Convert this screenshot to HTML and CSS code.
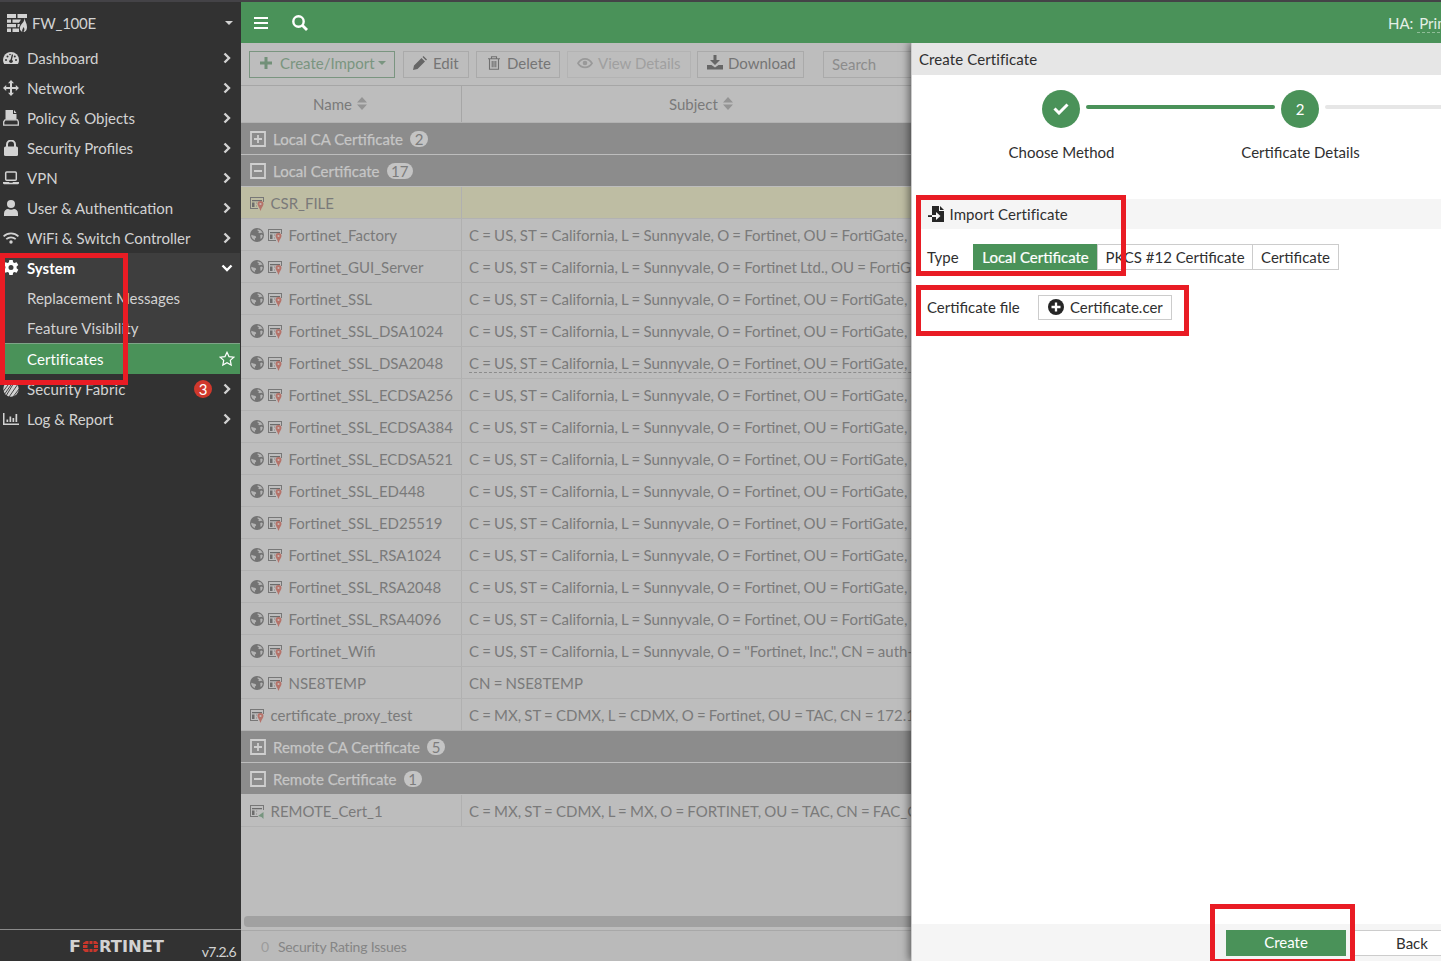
FILE: index.html
```html
<!DOCTYPE html>
<html lang="en">
<head>
<meta charset="utf-8">
<title>FW_100E - Certificates</title>
<link rel="stylesheet" href="styles.css">
</head>
<body>
<svg class="defs" aria-hidden="true">
  <symbol id="chev" viewBox="0 0 8 12"><path d="M1.5 1.5 6 6 1.5 10.5" fill="none" stroke="currentColor" stroke-width="2.4"/></symbol>
  <symbol id="globe" viewBox="0 0 14 14"><circle cx="7" cy="7" r="7" fill="#737373"/><path d="M7.6 1.2 11 2.4 12.8 5.2 11.2 4.8 9.6 5.2 8.2 4.4 9 3.2 7.6 2.8zM1.3 6.8 3.4 7.6 5.6 8 6.2 9.4 5 10.6 4.8 12.2 2.6 10.8 1.3 8.6zM10.2 7 11.6 6.6 12.8 7.6 11.8 10.2 10.4 10.8 10.4 8.8z" fill="#b4b4b4"/></symbol>
  <symbol id="cert" viewBox="0 0 14 14"><path d="M0 .5h14M.5 0v12M0 11.5h8M13.500 0v5" fill="none" stroke="#777" stroke-width="1"/><path d="M2 3h10v1.200H2zM2 5.500h2.500V10H2z" fill="#6c6c6c"/><path d="M6 6h1.200M6 9h1" stroke="#888" fill="none"/></symbol>
  <symbol id="local" viewBox="0 0 14 14"><use href="#cert" width="14" height="14"/><path d="M10.500 4a3 3 0 0 1 3 3c0 1.700-1.800 3.200-3 7-1.200-3.800-3-5.300-3-7a3 3 0 0 1 3-3z" fill="#b5736a"/><circle cx="10.500" cy="7" r="1.100" fill="#c8b8b5"/></symbol>
  <symbol id="remote" viewBox="0 0 14 14"><use href="#cert" width="14" height="14"/><path d="M7 9 14 5v9H9z" fill="#bdbdbd"/><path d="m8 11 5.500-4v7l-2-2z" fill="#77957f"/></symbol>
  <symbol id="plusbox" viewBox="0 0 16 16"><path d="M1 1h14v14H1zM4 8h8M8 4v8" fill="none" stroke="#cfcfcf" stroke-width="1.800"/></symbol>
  <symbol id="minusbox" viewBox="0 0 16 16"><path d="M1 1h14v14H1zM4 8h8" fill="none" stroke="#cfcfcf" stroke-width="1.800"/></symbol>
  <symbol id="sort" viewBox="0 0 10 13"><path d="M5 0l5 5.500H0zM0 7.500h10L5 13z" fill="#949494"/></symbol>
</svg>

<div class="app">
  <nav class="sidebar">
    <div class="host">
      <svg class="fw" viewBox="0 0 20 18"><path d="M0 0h9v4H0zM10.500 0H20v4h-9.500zM0 5.500h4v3.300H0zM5.500 5.500H14l-2 3.300H5.500zM0 10h9v3.300H0zM0 14.600h4V18H0zM5.500 14.600H12V18H5.500zM10.500 10h2.500l-1 3.300h-1.500z"/><path d="M17.500 4c.2 3 2.500 5 2.500 9 0 2.500-1 5-3.500 5 1.500-2 1-4 0-5-.6 2-1.500 2-1.200 5-3-1.500-3-5-1-7.500C15.500 9 17.500 7.500 17.500 4z"/></svg>
      <span>FW_100E</span><i class="caret"></i>
    </div>
    <div class="item"><svg class="ic" viewBox="0 0 16 16"><path d="M8 2a8 8 0 0 1 8 8c0 1.500-.4 2.900-1.100 4H1.100A8 8 0 0 1 8 2z"/><path d="M9.500 4.500 8.200 10" stroke="#323232" stroke-width="1.300"/><g fill="#323232"><circle cx="8" cy="11.300" r="1.800"/><circle cx="3" cy="10" r="1"/><circle cx="4.500" cy="6.500" r="1"/><circle cx="7" cy="4.500" r=".8"/><circle cx="11.800" cy="6.500" r="1"/><circle cx="13" cy="10" r="1"/></g></svg><span>Dashboard</span><svg class="chev"><use href="#chev"/></svg></div>
    <div class="item"><svg class="ic" viewBox="0 0 16 16"><path d="m8 0 3 3.200H9v3.800h3.800V5L16 8l-3.200 3V9H9v3.800h2L8 16l-3-3.200h2V9H3.200v2L0 8l3.200-3v2H7V3.200H5z"/></svg><span>Network</span><svg class="chev"><use href="#chev"/></svg></div>
    <div class="item"><svg class="ic" viewBox="0 0 16 16"><path d="M2.500 0H10v4h3.500v6H2.500zM11 0l2.500 3H11z"/><path d="M2 9.800h12.500l.8 2v3.400H.7v-3.400z" fill="#323232" stroke="#d2d2d2" stroke-width="1.300"/></svg><span>Policy &amp; Objects</span><svg class="chev"><use href="#chev"/></svg></div>
    <div class="item"><svg class="ic" viewBox="0 0 16 16"><path d="M4 7V4.500a4 4 0 0 1 8 0V7" fill="none" stroke="currentColor" stroke-width="2"/><rect x="1" y="6.500" width="14" height="9.500" rx="1.500"/></svg><span>Security Profiles</span><svg class="chev"><use href="#chev"/></svg></div>
    <div class="item"><svg class="ic" viewBox="0 0 16 16"><rect x="2.700" y="2" width="10.600" height="8.200" rx="1" fill="none" stroke="currentColor" stroke-width="1.500"/><path d="M0 12h6l.5.800h3L10 12h6v1.500l-1 .8H1l-1-.8z"/></svg><span>VPN</span><svg class="chev"><use href="#chev"/></svg></div>
    <div class="item"><svg class="ic" viewBox="0 0 16 16"><circle cx="8" cy="4" r="4"/><path d="M1 16v-2.500C1 10.500 3 9 5 9c2 1 4 1 6 0 2 0 4 1.500 4 4.500V16z"/></svg><span>User &amp; Authentication</span><svg class="chev"><use href="#chev"/></svg></div>
    <div class="item"><svg class="ic" viewBox="0 0 16 16"><g fill="none" stroke="currentColor" stroke-width="1.700"><path d="M.6 6.300c4.200-4 10.600-4 14.800 0M3.300 9.200c2.700-2.500 6.700-2.500 9.400 0"/></g><circle cx="8" cy="12" r="1.700"/></svg><span>WiFi &amp; Switch Controller</span><svg class="chev"><use href="#chev"/></svg></div>
    <div class="open">
      <div class="item strong"><svg class="ic" viewBox="0 0 16 16"><path fill-rule="evenodd" d="M6.300 0h3.400l.4 2.200 1.300.8 2.200-.8 1.700 2.900-1.700 1.500v1.600l1.700 1.500-1.700 3-2.200-.8-1.300.8L9.700 15H6.300l-.4-2.300-1.300-.8-2.200.8-1.700-3 1.700-1.500V6.600L.7 5.100l1.700-2.900 2.200.8 1.300-.8zM8 5a2.500 2.500 0 1 0 0 5 2.500 2.500 0 0 0 0-5z"/></svg><span>System</span><svg class="down" viewBox="0 0 12 8"><path d="M1.500 1.500 6 6l4.500-4.500" fill="none" stroke="currentColor" stroke-width="2.400"/></svg></div>
      <div class="item sub"><span>Replacement Messages</span></div>
      <div class="item sub wide"><span>Feature Visibility</span></div>
      <div class="item sub active"><span>Certificates</span><svg class="star" viewBox="0 0 16 16"><path d="m8 1.300 2 4.300 4.800.6-3.500 3.200.9 4.700L8 11.800l-4.200 2.300.9-4.700L1.200 6.200 6 5.600z" fill="none" stroke="currentColor" stroke-width="1.200"/></svg></div>
    </div>
    <div class="item wide"><svg class="ic" viewBox="0 0 16 16"><circle cx="8" cy="8" r="7.700"/><path d="M-1 12 8 0M3 15 12 0M6 16l9-13M10 16l6-8M1 14 10 1" stroke="#323232" stroke-width=".9"/></svg><span>Security Fabric</span><b class="alert">3</b><svg class="chev"><use href="#chev"/></svg></div>
    <div class="item"><svg class="ic" viewBox="0 0 16 16"><path d="M0 2h1.500v10.500H16V14H0zM3.500 8.500h1.700V11H3.500zM6.500 5.500h1.700V11H6.500zM9.500 7h1.700v4H9.500zM12.500 3h1.700v8h-1.700z"/></svg><span>Log &amp; Report</span><svg class="chev"><use href="#chev"/></svg></div>
    <div class="brand">
      <svg class="logo" viewBox="0 0 94 13"><g fill="#d2d2d2" font-family="DejaVu Sans, sans-serif" font-weight="700" font-size="15"><text x="-1" y="12" textLength="12" lengthAdjust="spacingAndGlyphs">F</text><text x="29" y="12" textLength="65" lengthAdjust="spacingAndGlyphs">RTINET</text></g><path d="M16 1h2.500v3H13V3zM19.500 1h3v3h-3zM23.500 1H26l2 2v1h-4.500zM13 5h4.500v3H13zM24 5h4v3h-4zM13 9h5.500v3H15l-2-2zM19.500 9h3v3h-3zM23.500 9H28v1l-2 2h-2.500z" fill="#c8372c"/></svg>
      <span class="version">v7.2.6</span>
    </div>
  </nav>

  <div class="main">
    <header class="topbar">
      <svg class="burger" viewBox="0 0 14 12"><path d="M0 1h14M0 6h14M0 11h14" stroke="#fff" stroke-width="2"/></svg>
      <svg class="find" viewBox="0 0 16 16"><circle cx="6.500" cy="6.500" r="5.200" fill="none" stroke="#fff" stroke-width="2.400"/><path d="m10.500 10.500 4.500 4.500" stroke="#fff" stroke-width="2.800"/></svg>
      <span class="ha">HA: <u>Primary</u></span>
    </header>
    <div class="body">
      <section class="list">
        <div class="toolbar">
          <span class="btn create"><svg viewBox="0 0 14 14"><path d="M7 1v12M1 7h12" stroke="#729078" stroke-width="3"/></svg>Create/Import<i class="caret"></i></span>
          <span class="btn edit"><svg viewBox="0 0 14 14"><path d="M0 14l1-4.500L8.500 2 12 5.500 4.500 13zM9.500 1l1-1 3.500 3.500-1 1z" fill="#666"/></svg>Edit</span>
          <span class="btn del"><svg viewBox="0 0 14 14"><path d="M1 2.800h12M4.500 2.500V.7h5v1.800M2.500 3v10.300h9V3M5.200 5v6.300M7 5v6.300M8.800 5v6.300" fill="none" stroke="#707070" stroke-width="1.100"/></svg>Delete</span>
          <span class="btn view"><svg viewBox="0 0 16 14"><path d="M1 7.300c3.600-6 10.400-6 14 0-3.600 5.500-10.400 5.500-14 0z" fill="none" stroke="#999" stroke-width="1.700"/><circle cx="8" cy="7" r="2.300" fill="#999"/></svg>View Details</span>
          <span class="btn down-btn"><svg viewBox="0 0 16 15"><path d="M6.500 0h3v5H13l-5 5-5-5h3.500zM0 10h4.500L8 12.500l3.500-2.500H16v4.500H0z" fill="#666"/></svg>Download</span>
          <i class="sep"></i>
          <span class="search">Search</span>
        </div>
        <div class="row head"><div class="name">Name<svg><use href="#sort"/></svg></div><div class="subject">Subject<svg><use href="#sort"/></svg></div></div>
        <div class="group"><svg><use href="#plusbox"/></svg>Local CA Certificate<b>2</b></div>
        <div class="group"><svg><use href="#minusbox"/></svg>Local Certificate<b>17</b></div>
        <div class="row selected"><div class="name"><svg><use href="#local"/></svg>CSR_FILE</div><div class="subject"></div></div>
        <div class="row"><div class="name"><svg><use href="#globe"/></svg><svg><use href="#local"/></svg>Fortinet_Factory</div><div class="subject">C = US, ST = California, L = Sunnyvale, O = Fortinet, OU = FortiGate, CN = FG100E</div></div>
        <div class="row"><div class="name"><svg><use href="#globe"/></svg><svg><use href="#local"/></svg>Fortinet_GUI_Server</div><div class="subject">C = US, ST = California, L = Sunnyvale, O = Fortinet Ltd., OU = FortiGate, CN = FortiGate</div></div>
        <div class="row"><div class="name"><svg><use href="#globe"/></svg><svg><use href="#local"/></svg>Fortinet_SSL</div><div class="subject">C = US, ST = California, L = Sunnyvale, O = Fortinet, OU = FortiGate, CN = FG100E</div></div>
        <div class="row"><div class="name"><svg><use href="#globe"/></svg><svg><use href="#local"/></svg>Fortinet_SSL_DSA1024</div><div class="subject">C = US, ST = California, L = Sunnyvale, O = Fortinet, OU = FortiGate, CN = FG100E</div></div>
        <div class="row"><div class="name"><svg><use href="#globe"/></svg><svg><use href="#local"/></svg>Fortinet_SSL_DSA2048</div><div class="subject"><span class="hovered">C = US, ST = California, L = Sunnyvale, O = Fortinet, OU = FortiGate, CN = FG100E</span></div></div>
        <div class="row"><div class="name"><svg><use href="#globe"/></svg><svg><use href="#local"/></svg>Fortinet_SSL_ECDSA256</div><div class="subject">C = US, ST = California, L = Sunnyvale, O = Fortinet, OU = FortiGate, CN = FG100E</div></div>
        <div class="row"><div class="name"><svg><use href="#globe"/></svg><svg><use href="#local"/></svg>Fortinet_SSL_ECDSA384</div><div class="subject">C = US, ST = California, L = Sunnyvale, O = Fortinet, OU = FortiGate, CN = FG100E</div></div>
        <div class="row"><div class="name"><svg><use href="#globe"/></svg><svg><use href="#local"/></svg>Fortinet_SSL_ECDSA521</div><div class="subject">C = US, ST = California, L = Sunnyvale, O = Fortinet, OU = FortiGate, CN = FG100E</div></div>
        <div class="row"><div class="name"><svg><use href="#globe"/></svg><svg><use href="#local"/></svg>Fortinet_SSL_ED448</div><div class="subject">C = US, ST = California, L = Sunnyvale, O = Fortinet, OU = FortiGate, CN = FG100E</div></div>
        <div class="row"><div class="name"><svg><use href="#globe"/></svg><svg><use href="#local"/></svg>Fortinet_SSL_ED25519</div><div class="subject">C = US, ST = California, L = Sunnyvale, O = Fortinet, OU = FortiGate, CN = FG100E</div></div>
        <div class="row"><div class="name"><svg><use href="#globe"/></svg><svg><use href="#local"/></svg>Fortinet_SSL_RSA1024</div><div class="subject">C = US, ST = California, L = Sunnyvale, O = Fortinet, OU = FortiGate, CN = FG100E</div></div>
        <div class="row"><div class="name"><svg><use href="#globe"/></svg><svg><use href="#local"/></svg>Fortinet_SSL_RSA2048</div><div class="subject">C = US, ST = California, L = Sunnyvale, O = Fortinet, OU = FortiGate, CN = FG100E</div></div>
        <div class="row"><div class="name"><svg><use href="#globe"/></svg><svg><use href="#local"/></svg>Fortinet_SSL_RSA4096</div><div class="subject">C = US, ST = California, L = Sunnyvale, O = Fortinet, OU = FortiGate, CN = FG100E</div></div>
        <div class="row"><div class="name"><svg><use href="#globe"/></svg><svg><use href="#local"/></svg>Fortinet_Wifi</div><div class="subject">C = US, ST = California, L = Sunnyvale, O = "Fortinet, Inc.", CN = auth-cert</div></div>
        <div class="row"><div class="name"><svg><use href="#globe"/></svg><svg><use href="#local"/></svg>NSE8TEMP</div><div class="subject">CN = NSE8TEMP</div></div>
        <div class="row"><div class="name"><svg><use href="#local"/></svg>certificate_proxy_test</div><div class="subject">C = MX, ST = CDMX, L = CDMX, O = Fortinet, OU = TAC, CN = 172.16</div></div>
        <div class="group"><svg><use href="#plusbox"/></svg>Remote CA Certificate<b>5</b></div>
        <div class="group"><svg><use href="#minusbox"/></svg>Remote Certificate<b>1</b></div>
        <div class="row"><div class="name"><svg><use href="#remote"/></svg>REMOTE_Cert_1</div><div class="subject">C = MX, ST = CDMX, L = MX, O = FORTINET, OU = TAC, CN = FAC_CERT</div></div>
        <div class="scroll"></div>
        <div class="status"><span class="zero">0</span><span>Security Rating Issues</span></div>
      </section>

      <section class="panel">
        <div class="title">Create Certificate</div>
        <div class="steps">
          <div class="step"><div class="dot"><svg viewBox="0 0 16 12"><path d="m1.500 5.500 4.500 4.500 8.500-8.500" fill="none" stroke="#fff" stroke-width="3"/></svg></div><i class="line done"></i><span>Choose Method</span></div>
          <div class="step"><div class="dot">2</div><i class="line"></i><span>Certificate Details</span></div>
        </div>
        <div class="section"><svg viewBox="0 0 16 16"><path d="M4 0h7v5h5v11H4zM12 0l4 4h-4z"/><path d="M0 9h8V6l4.500 4L8 14v-3H0z" fill="#f5f5f5"/><path d="M0 9.200h4v1.800H0z"/></svg>Import Certificate</div>
        <div class="field"><label>Type</label><div class="seg"><span class="on">Local Certificate</span><span class="pk">PKCS #12 Certificate</span><span class="ce">Certificate</span></div></div>
        <div class="field file"><label>Certificate file</label><span class="upload"><svg viewBox="0 0 16 16"><circle cx="8" cy="8" r="8"/><path d="M8 3.500v9M3.500 8h9" stroke="#fff" stroke-width="2.300"/></svg>Certificate.cer</span></div>
        <div class="foot"><span class="primary">Create</span><span class="back">Back</span></div>
      </section>
    </div>
  </div>
  <div class="mark mark-nav"></div>
  <div class="mark mark-type"></div>
  <div class="mark mark-file"></div>
  <div class="mark mark-create"></div>
</div>
</body>
</html>
```
FILE: styles.css
```css
* { box-sizing: border-box; }
body { margin: 0; font: 15px/20px Lato, sans-serif; color: #2f2f2f; }
svg { display: block; flex: none; }
.defs { position: absolute; width: 0; height: 0; }
.app { position: relative; display: flex; width: 1441px; height: 961px; overflow: hidden; border-top: 2px solid #444347; background: #323232; }

.sidebar { width: 241px; flex: none; display: flex; flex-direction: column; background: #323232; color: #d2d2d2; }
.host { height: 41px; display: flex; align-items: center; padding: 1px 8px 0 7px; }
.host span { flex: 1; margin-left: 5px; letter-spacing: -.25px; }
.fw { width: 20px; height: 18px; fill: #d2d2d2; }
.caret { width: 0; height: 0; border: 4px solid transparent; border-top-color: currentColor; border-bottom: 0; }
.item { height: 30px; display: flex; align-items: center; padding: 0 10px 0 3px; flex: none; }
.item .ic { width: 16px; height: 16px; margin-right: 8px; fill: currentColor; }
.item span { flex: 1; white-space: nowrap; }
.wide span { letter-spacing: .12px; }
.chev { width: 8px; height: 12px; }
.open { background: #3e3e3e; margin-right: 1px; }
.open .item { padding-right: 7px; }
.open .strong { color: #fff; font-weight: 700; }
.down { width: 12px; height: 8px; }
.open .item.sub { padding-left: 27px; }
.open .active { height: 31px; background: #4a9259; border-top: 1px solid #7fa488; color: #fff; padding-right: 5px; letter-spacing: .1px; }
.star { width: 16px; height: 16px; }
.alert { width: 18px; height: 18px; border-radius: 9px; background: #d0382c; color: #fff; font-weight: 400; line-height: 18px; text-align: center; margin-right: 11px; }
.brand { margin-top: auto; height: 32px; border-top: 1px solid #8a8a8a; display: flex; justify-content: flex-end; padding: 10px 5px 0 0; }
.logo { width: 94px; height: 13px; margin-right: 38px; overflow: visible; }
.version { font-size: 14px; line-height: 24px; letter-spacing: -.65px; }

.main { flex: 1; min-width: 0; display: flex; flex-direction: column; }
.topbar { height: 41px; flex: none; background: #4a9259; display: flex; align-items: center; padding-left: 13px; color: #e4efe6; }
.burger { width: 14px; height: 12px; }
.find { width: 16px; height: 16px; margin-left: 24px; }
.ha { margin-left: 1080px; white-space: nowrap; }
.ha u { text-decoration: none; border-bottom: 1px dashed #8fbd98; padding-left: 2px; }
.body { flex: 1; display: flex; min-height: 0; }

.list { width: 670px; flex: none; overflow: hidden; display: flex; flex-direction: column; background: #bdbdbd; color: #7a7a7a; white-space: nowrap; }
.toolbar { height: 43px; flex: none; display: flex; align-items: center; padding-left: 8px; border-bottom: 1px solid #a6a6a6; }
.btn { height: 27px; flex: none; border: 1px solid #aaa; display: flex; align-items: center; color: #757575; padding-bottom: 2px; }
.btn svg { width: 14px; height: 14px; margin-top: -1px; }
.create { width: 146px; padding-left: 9px; border-color: #7a9580; color: #7a9580; gap: 7px; }
.create .caret { margin-left: -4px; }
.edit { width: 66px; margin-left: 8px; padding-left: 9px; gap: 6px; }
.del { width: 84px; margin-left: 7px; padding-left: 10px; gap: 6px; }
.view { width: 124px; margin-left: 7px; padding-left: 9px; gap: 5px; color: #a0a0a0; border-color: #b3b3b3; }
.btn.view svg { width: 16px; }
.down-btn { width: 107px; margin-left: 6px; padding-left: 9px; gap: 5px; }
.btn.down-btn svg { width: 16px; height: 15px; }
.sep { width: 1px; height: 27px; background: #aaa; margin-left: 9px; }
.search { margin-left: 10px; width: 160px; flex: none; height: 27px; border: 1px solid #aaa; padding: 2px 8px; color: #8c8c8c; }

.row { height: 32px; flex: none; display: flex; border-bottom: 1px solid #b2b2b2; }
.name { width: 221px; flex: none; border-right: 1px solid #b0b0b0; display: flex; align-items: center; padding: 1px 0 0 9px; }
.name svg { width: 14px; height: 14px; margin-right: 4px; }
.name svg:last-of-type { margin: 2px 6.5px 0 0; }
.subject { flex: 1; min-width: 0; padding: 6px 0 0 7px; overflow: hidden; word-spacing: -.65px; }
.hovered { border-bottom: 1px dashed #8c8c8c; display: inline-block; line-height: 18px; padding-top: 1px; }
.head { height: 37px; }
.head .name, .head .subject { display: flex; align-items: center; border-color: #a6a6a6; padding: 0; }
.head .name { justify-content: center; padding-right: 22px; }
.head .subject { padding-left: 207px; }
.head svg, .head .name svg:last-of-type { width: 10px; height: 13px; margin: -2px 0 0 5px; }
.selected { background: #bebda3; }
.group { height: 32px; flex: none; display: flex; align-items: center; background: #8c8c8c; border-bottom: 1px solid #bdbdbd; color: #c6c6c6; padding: 1px 0 0 9px; -webkit-text-stroke: .25px #c6c6c6; }
.group svg { width: 16px; height: 16px; margin-right: 7px; }
.group b { margin-left: 7px; min-width: 18px; height: 16px; border-radius: 8px; background: #c4c4c4; color: #7c7c7c; font-weight: 400; line-height: 16px; text-align: center; padding: 0 4.500px; -webkit-text-stroke: 0; }
.scroll { margin: auto 0 3px 3px; height: 11px; flex: none; background: #a1a1a1; border-radius: 4px 0 0 4px; }
.status { height: 31px; flex: none; border-top: 1px solid #a8a8a8; background: #bababa; display: flex; align-items: center; gap: 9px; padding: 2px 0 0 20px; font-size: 14px; letter-spacing: -.2px; color: #858585; }
.zero { color: #9c9c9c; }

.panel { flex: 1; min-width: 0; overflow: hidden; display: flex; flex-direction: column; background: #fff; border-left: 1px solid #ccc; box-shadow: -2px 0 8px rgba(0, 0, 0, .5); clip-path: inset(0 0 0 -16px); white-space: nowrap; position: relative; }
.title { height: 32px; flex: none; background: #e6e6e6; padding: 6px 7px; letter-spacing: .1px; }
.steps { display: flex; height: 124px; flex: none; padding: 15px 0 0 30px; }
.step { width: 239px; flex: none; display: grid; grid-template-columns: 100px 38px 101px; grid-template-rows: 38px auto; row-gap: 14px; }
.dot { grid-column: 2; width: 38px; height: 38px; border-radius: 50%; background: #4a9259; color: #fff; display: flex; align-items: center; justify-content: center; }
.dot svg { width: 16px; height: 12px; }
.line { width: 189px; height: 4px; margin: 15px 0 0 6px; border-radius: 2px; background: #e6e6e6; }
.line.done { background: #4a9259; }
.step span { grid-column: 1 / 4; text-align: center; }
.section { height: 30px; flex: none; margin-left: 8px; padding-left: 8px; background: #f5f5f5; display: flex; align-items: center; gap: 5.5px; letter-spacing: .08px; }
.section svg { width: 16px; height: 16px; fill: #262626; }
.field { height: 26px; flex: none; margin: 15px 0 0 15px; display: flex; align-items: center; }
.field label { width: 46px; }
.seg { display: flex; height: 26px; }
.seg span { border: 1px solid #ccc; line-height: 25px; text-align: center; margin-left: -1px; }
.seg .on { background: #4a9259; border-color: #4a9259; color: #fff; width: 125px; margin: 0; -webkit-text-stroke: .2px #fff; }
.seg .pk { width: 156px; }
.seg .ce { width: 87px; }
.file { margin-top: 24px; }
.file label { width: 111px; }
.upload { width: 134px; height: 25px; border: 1px solid #ccc; display: flex; align-items: center; gap: 6px; padding-left: 9px; }
.upload svg { width: 16px; height: 16px; fill: #262626; }
.foot { margin-top: auto; height: 37px; flex: none; background: #f5f5f5; display: flex; gap: 6px; padding: 6px 0 0 314px; }
.foot span { width: 120px; height: 26px; flex: none; line-height: 25px; text-align: center; }
.foot .primary { background: #4a9259; color: #fff; }
.foot .back { background: #fff; border: 1px solid #ccc; line-height: 24px; }

.mark { position: absolute; border: 5px solid #e91c24; }
.mark-nav { left: 0; top: 251px; width: 128px; height: 132px; }
.mark-type { left: 916px; top: 193px; width: 210px; height: 81px; }
.mark-file { left: 916px; top: 283px; width: 273px; height: 51px; }
.mark-create { left: 1210px; top: 902px; width: 145px; height: 60px; }
```
